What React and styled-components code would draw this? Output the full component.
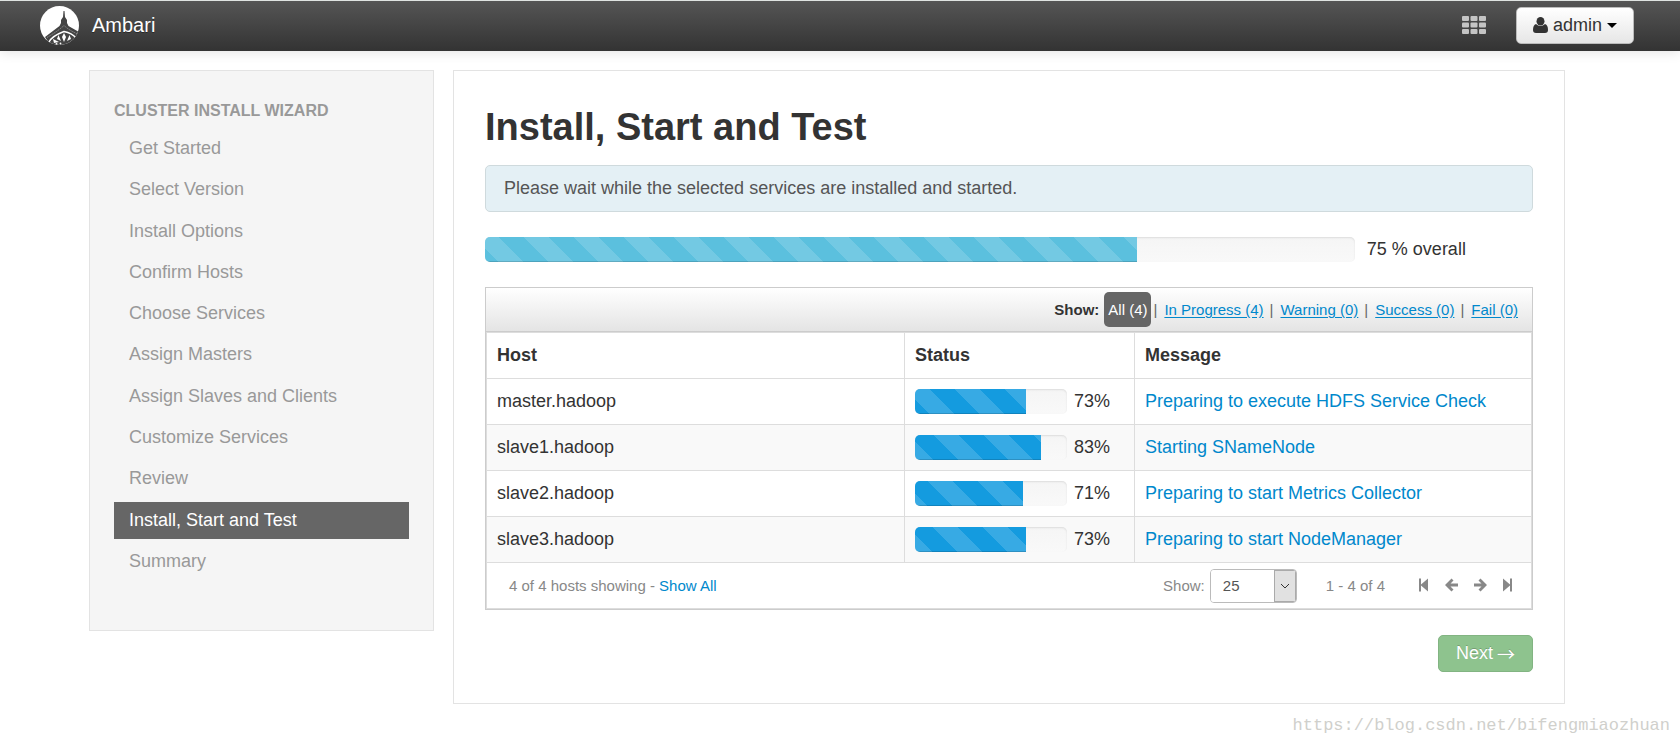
import React from 'react'
import styled, { createGlobalStyle, css } from 'styled-components'

const GlobalStyle = createGlobalStyle`
  body {
    margin: 0;
    background: #fff;
    color: #333;
    font-family: 'Liberation Sans', Arial, sans-serif;
    font-size: 18px;
    line-height: 25px;
  }
  * {
    box-sizing: border-box;
  }
  button,
  select {
    font: inherit;
  }
`

const Navbar = styled.header`
  display: flex;
  align-items: center;
  justify-content: space-between;
  height: 51px;
  padding: 0 46px 2px 40px;
  border-top: 1px solid #dfe3e1;
  background: linear-gradient(#555, #333);
  box-shadow: 0 1px 12px rgba(0, 0, 0, 0.12);
`

const Brand = styled.a`
  display: flex;
  align-items: center;
  gap: 13px;
  color: #fff;
  font-size: 20px;
  text-decoration: none;
  text-shadow: 0 1px 0 rgba(0, 0, 0, 0.4);
`

const NavActions = styled.div`
  display: flex;
  align-items: center;
  gap: 30px;
`

const IconButton = styled.button`
  display: flex;
  padding: 0;
  border: 0;
  background: none;
  color: inherit;
  cursor: pointer;
`

const UserButton = styled.button`
  display: flex;
  align-items: center;
  gap: 5px;
  height: 37px;
  padding: 0 16px;
  border: 1px solid #bbb;
  border-radius: 5px;
  background: linear-gradient(#fff, #e6e6e6);
  color: #333;
  cursor: pointer;
`

const Page = styled.div`
  display: grid;
  grid-template-columns: 345fr 1112fr;
  gap: 19px;
  align-items: start;
  padding: 19px 115px 0 89px;
`

const Sidebar = styled.nav`
  min-height: 561px;
  padding: 24px;
  border: 1px solid #e3e3e3;
  background: #f5f5f5;
`

const SidebarTitle = styled.h2`
  margin: 3px 0 7px;
  color: #999;
  font-size: 16px;
  line-height: 25px;
  text-transform: uppercase;
`

const Steps = styled.ul`
  display: flex;
  flex-direction: column;
  justify-content: space-between;
  min-height: 450px;
  margin: 0;
  padding: 0;
  list-style: none;
`

const Step = styled.a`
  display: block;
  padding: 6px 15px;
  background: ${({ $active }) => ($active ? '#666' : 'transparent')};
  color: ${({ $active }) => ($active ? '#fff' : '#999')};
  text-decoration: none;
`

const Content = styled.main`
  padding: 31px;
  border: 1px solid #e3e3e3;
`

const Title = styled.h1`
  margin: 0 0 13px;
  font-size: 38px;
  line-height: 50px;
`

const Alert = styled.div`
  height: 47px;
  padding: 10px 18px;
  border: 1px solid #cfdadd;
  border-radius: 5px;
  background: #e4f0f5;
  color: #555;
`

const Overall = styled.div`
  display: flex;
  align-items: center;
  gap: 12px;
  margin: 25px 0;
`

const Track = styled.div`
  flex: none;
  width: ${({ $width }) => $width};
  height: 25px;
  overflow: hidden;
  border-radius: 5px;
  background: linear-gradient(#f5f5f5, #f9f9f9);
  box-shadow: inset 0 1px 2px rgba(0, 0, 0, 0.1);
`

const Bar = styled.div`
  height: 100%;
  background-color: ${({ $color }) => $color};
  background-image: linear-gradient(
    45deg,
    rgba(255, 255, 255, 0.15) 25%,
    transparent 25%,
    transparent 50%,
    rgba(255, 255, 255, 0.15) 50%,
    rgba(255, 255, 255, 0.15) 75%,
    transparent 75%
  );
  background-position: ${({ $shift }) => $shift}px 0;
  background-size: 50px 50px;
  box-shadow: inset 0 -1px 0 rgba(0, 0, 0, 0.15);
`

const Panel = styled.section`
  border: 1px solid #ccc;
`

const Filters = styled.div`
  display: flex;
  align-items: center;
  justify-content: flex-end;
  height: 44px;
  padding: 0 14px;
  border-bottom: 1px solid #ccc;
  background: linear-gradient(#fff, #e4e4e4);
  font-size: 15px;
`

const FilterLink = styled.a`
  color: #0088cc;
  text-decoration: underline;
  text-underline-offset: 2px;
  ${({ $active }) =>
    $active &&
    css`
      margin-left: 5px;
      padding: 5px 4px;
      border-radius: 5px;
      background: #666;
      color: #fff;
      text-decoration: none;
    `}
`

const Divider = styled.span`
  padding: ${({ $tight }) => ($tight ? '0 7px 0 2px' : '0 7px 0 6px')};
  color: #666;
`

const Table = styled.table`
  width: 100%;
  border: 1px solid #ddd;
  border-collapse: collapse;
  table-layout: fixed;

  th,
  td {
    height: 46px;
    padding: 0 10px;
    border: 1px solid #ddd;
    text-align: left;
  }
  tbody tr:nth-child(even) {
    background: #f9f9f9;
  }
`

const Column = styled.col`
  width: ${({ $width }) => $width};
`

const Status = styled.div`
  display: flex;
  align-items: center;
  gap: 7px;
`

const Link = styled.a`
  color: #0088cc;
  text-decoration: none;
`

const Footer = styled.div`
  display: flex;
  align-items: center;
  justify-content: space-between;
  height: 46px;
  padding: 0 14px 0 22px;
  border: 1px solid #ddd;
  border-top: 0;
  color: #888;
  font-size: 15px;
`

const Pager = styled.div`
  display: flex;
  align-items: center;
`

const SelectWrap = styled.span`
  display: grid;
  grid-template-columns: 1fr 22px;
  width: 87px;
  height: 34px;
  margin: 0 29px 0 5px;
  overflow: hidden;
  border: 1px solid #bbb;
  border-radius: 4px;
`

const Select = styled.select`
  grid-area: 1 / 1 / 2 / 3;
  padding: 0 12px;
  border: 0;
  background: #fff;
  color: #555;
  appearance: none;
`

const SelectArrow = styled.span`
  display: flex;
  grid-area: 1 / 2;
  align-items: center;
  justify-content: center;
  border: 1px solid #aaa;
  background: #e1e1e1;
  pointer-events: none;
`

const PageButtons = styled.div`
  display: flex;
  gap: 12px;
  margin-left: 32px;
  padding-bottom: 2px;
`

const Actions = styled.div`
  display: flex;
  justify-content: flex-end;
  margin-top: 25px;
`

const NextButton = styled.button`
  display: flex;
  align-items: center;
  gap: 4px;
  height: 37px;
  padding: 0 17px;
  border: 1px solid #82b482;
  border-radius: 5px;
  background: #8ec38e;
  color: #fff;
  text-shadow: 0 -1px 0 rgba(0, 0, 0, 0.2);
`

const Arrow = styled.span`
  font-family: 'Noto Sans CJK SC', sans-serif;
`

const Watermark = styled.footer`
  padding: 9px 10px 0;
  color: #d0d0cc;
  font-family: 'Liberation Mono', monospace;
  font-size: 17px;
  text-align: right;
`

const steps = [
  'Get Started',
  'Select Version',
  'Install Options',
  'Confirm Hosts',
  'Choose Services',
  'Assign Masters',
  'Assign Slaves and Clients',
  'Customize Services',
  'Review',
  'Install, Start and Test',
  'Summary',
]

const filters = [
  'All (4)',
  'In Progress (4)',
  'Warning (0)',
  'Success (0)',
  'Fail (0)',
]

const hosts = [
  {
    name: 'master.hadoop',
    progress: 73,
    shift: -10,
    message: 'Preparing to execute HDFS Service Check',
  },
  {
    name: 'slave1.hadoop',
    progress: 83,
    shift: 19,
    message: 'Starting SNameNode',
  },
  {
    name: 'slave2.hadoop',
    progress: 71,
    shift: 13,
    message: 'Preparing to start Metrics Collector',
  },
  {
    name: 'slave3.hadoop',
    progress: 73,
    shift: 18,
    message: 'Preparing to start NodeManager',
  },
]

const Logo = () => (
  <svg width='39' height='39' viewBox='0 0 39 39' aria-hidden='true'>
    <defs>
      <clipPath id='logo-disc'>
        <circle cx='19.5' cy='19.5' r='19.5' />
      </clipPath>
    </defs>
    <g clipPath='url(#logo-disc)'>
      <rect width='39' height='39' fill='#fff' />
      <path
        d='M23.500 5h1l.5 6 2 3v3l1.500 3 11.500 6.500V39H10l-5-8L19.500 20l1.500-3v-3l2-3z'
        fill='#444'
      />
      <path
        d='M7 31.500Q18 25 24 19.500Q30 25 39 28.500'
        fill='none'
        stroke='#aaa'
        strokeWidth='0.800'
        strokeDasharray='1.500 1'
      />
      <path
        d='M9 36Q12 30 24 25.500Q32 27 36 32'
        fill='none'
        stroke='#fff'
        strokeWidth='1.500'
      />
      <g fill='#fff'>
        <path d='M24 27l2 4-2 5-2-5z' />
        <path d='M18.500 29l2.500 6-4-2z' />
        <path d='M29.500 29l-2.500 6 4-2z' />
        <path d='M13 33l6 3-5 1z' />
        <circle cx='16.500' cy='38' r='1' />
        <circle cx='20.500' cy='37.500' r='0.900' />
      </g>
    </g>
  </svg>
)

const GridIcon = () => (
  <svg width='24' height='18' viewBox='0 0 24 18' fill='#c4c4c4'>
    {[0, 6.5, 13].map((y) =>
      [0, 8.5, 17].map((x) => (
        <rect key={`${x}-${y}`} x={x} y={y} width='7' height='5' rx='1' />
      ))
    )}
  </svg>
)

const UserIcon = () => (
  <svg width='15' height='16' viewBox='0 0 15 16' fill='#333'>
    <ellipse cx='7.5' cy='4.3' rx='4' ry='4.3' />
    <path d='M3 7C1 7.5 0 10 0 13c0 2 1 3 3 3h9c2 0 3-1 3-3 0-3-1-5.500-3-6-2.500 2.500-6.500 2.500-9 0z' />
  </svg>
)

const CaretIcon = () => (
  <svg width='10' height='5' viewBox='0 0 10 5'>
    <path d='M0 0h10L5 5z' fill='#000' />
  </svg>
)

const pageIcons = [
  { label: 'First page', d: 'M2 1.500h2v6l7-6v13l-7-6v6H2z' },
  { label: 'Previous page', d: 'M0 8l6.500-6.500 2 2L5.500 6.500H13v3H5.500l3 3-2 2z' },
  { label: 'Next page', d: 'M14 8L7.500 1.500l-2 2 3 3H1v3h7.500l-3 3 2 2z' },
  { label: 'Last page', d: 'M11 1.500H9v6l-7-6v13l7-6v6h2z' },
]

const ProgressBar = ({ value, width, color, shift, label }) => (
  <Track
    $width={width}
    role='progressbar'
    aria-label={label}
    aria-valuenow={value}
  >
    <Bar $color={color} $shift={shift} style={{ width: `${value}%` }} />
  </Track>
)

const App = () => {
  return (
    <>
      <GlobalStyle />
      <Navbar>
        <Brand href='#'>
          <Logo />
          Ambari
        </Brand>
        <NavActions>
          <IconButton aria-label='Views'>
            <GridIcon />
          </IconButton>
          <UserButton>
            <UserIcon />
            admin
            <CaretIcon />
          </UserButton>
        </NavActions>
      </Navbar>
      <Page>
        <Sidebar>
          <SidebarTitle>Cluster Install Wizard</SidebarTitle>
          <Steps>
            {steps.map((step) => (
              <li key={step}>
                <Step href='#' $active={step === 'Install, Start and Test'}>
                  {step}
                </Step>
              </li>
            ))}
          </Steps>
        </Sidebar>
        <Content>
          <Title>Install, Start and Test</Title>
          <Alert>
            Please wait while the selected services are installed and started.
          </Alert>
          <Overall>
            <ProgressBar
              value={75}
              width='83%'
              color='#5bc0de'
              shift={-11}
              label='Overall'
            />
            <span>75 % overall</span>
          </Overall>
          <Panel>
            <Filters>
              <strong>Show:</strong>
              {filters.map((filter, i) => (
                <React.Fragment key={filter}>
                  {i > 0 && <Divider $tight={i === 1}>|</Divider>}
                  <FilterLink href='#' $active={i === 0}>
                    {filter}
                  </FilterLink>
                </React.Fragment>
              ))}
            </Filters>
            <Table>
              <colgroup>
                <Column $width='40%' />
                <Column $width='22%' />
                <Column $width='38%' />
              </colgroup>
              <thead>
                <tr>
                  <th>Host</th>
                  <th>Status</th>
                  <th>Message</th>
                </tr>
              </thead>
              <tbody>
                {hosts.map(({ name, progress, shift, message }) => (
                  <tr key={name}>
                    <td>{name}</td>
                    <td>
                      <Status>
                        <ProgressBar
                          value={progress}
                          width='152px'
                          color='#149bdf'
                          shift={shift}
                          label={name}
                        />
                        <span>{progress}%</span>
                      </Status>
                    </td>
                    <td>
                      <Link href='#'>{message}</Link>
                    </td>
                  </tr>
                ))}
              </tbody>
            </Table>
            <Footer>
              <span>
                4 of 4 hosts showing - <Link href='#'>Show All</Link>
              </span>
              <Pager>
                <label htmlFor='page-size'>Show:</label>
                <SelectWrap>
                  <Select id='page-size' defaultValue='25'>
                    <option>10</option>
                    <option>25</option>
                    <option>50</option>
                  </Select>
                  <SelectArrow>
                    <svg width='10' height='6' viewBox='0 0 10 6'>
                      <path d='M1 1l4 4 4-4' fill='none' stroke='#333' />
                    </svg>
                  </SelectArrow>
                </SelectWrap>
                <span>1 - 4 of 4</span>
                <PageButtons>
                  {pageIcons.map(({ label, d }) => (
                    <IconButton key={label} aria-label={label}>
                      <svg width='16' height='16' viewBox='0 0 16 16'>
                        <path d={d} fill='currentColor' />
                      </svg>
                    </IconButton>
                  ))}
                </PageButtons>
              </Pager>
            </Footer>
          </Panel>
          <Actions>
            <NextButton disabled>
              Next <Arrow>→</Arrow>
            </NextButton>
          </Actions>
        </Content>
      </Page>
      <Watermark>https://blog.csdn.net/bifengmiaozhuan</Watermark>
    </>
  )
}

export default App
